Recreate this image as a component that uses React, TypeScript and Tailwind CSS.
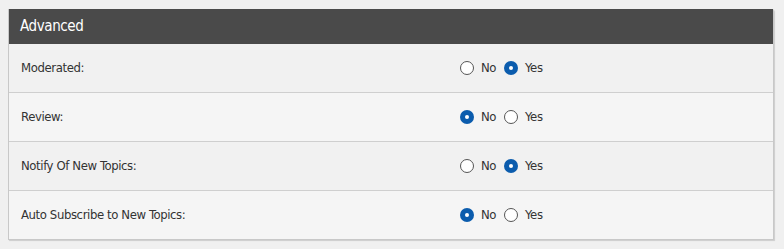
import React, { useState } from 'react';

type Row = { label: string; value: 'no' | 'yes' };

const initial: Row[] = [
    { label: 'Moderated:', value: 'yes' },
    { label: 'Review:', value: 'no' },
    { label: 'Notify Of New Topics:', value: 'yes' },
    { label: 'Auto Subscribe to New Topics:', value: 'no' },
];

function Radio({ checked, label, onClick }: { checked: boolean; label: string; onClick: () => void }) {
    return (
        <button type="button" onClick={onClick} className="flex items-center gap-[7px]">
            {checked ? (
                <span className="w-[14px] h-[14px] rounded-full bg-[#0b5cad] flex items-center justify-center">
                    <span className="w-[4px] h-[4px] rounded-full bg-white" />
                </span>
            ) : (
                <span className="w-[14px] h-[14px] rounded-full border border-[#555] bg-white" />
            )}
            <span>{label}</span>
        </button>
    );
}

export default function App() {
    const [rows, setRows] = useState(initial);

    const set = (i: number, value: 'no' | 'yes') =>
        setRows(rows.map((r, j) => (j === i ? { ...r, value } : r)));

    return (
        <main
            className="min-h-[249px] bg-[#f0f0f0] pt-[9px] px-[8px] pb-[10px] text-[13px] tracking-[-0.4px] text-[#333]"
            style={{ fontFamily: '"DejaVu Sans Condensed", "DejaVu Sans", sans-serif' }}
        >
            <div className="w-[766px] border border-[#c8c8c8] border-t-0 shadow-[1px_1px_1px_rgba(0,0,0,0.15)] rounded-tr-[2px]">
                {/* Header */}
                <div className="h-[35px] bg-[#4a4a4a] text-white text-[15px] flex items-center px-[11px]">
                    Advanced
                </div>

                {rows.map((row, i) => (
                    <div
                        key={row.label}
                        className={`flex items-center px-[12px] ${i > 0 ? 'h-[49px] border-t border-[#cfcfcf]' : 'h-[48px]'} ${i % 2 === 0 ? 'bg-[#f1f1f1]' : 'bg-[#f5f5f5]'}`}
                    >
                        <div className="w-[439px]">{row.label}</div>
                        <div className="flex items-center gap-[8px]">
                            <Radio checked={row.value === 'no'} label="No" onClick={() => set(i, 'no')} />
                            <Radio checked={row.value === 'yes'} label="Yes" onClick={() => set(i, 'yes')} />
                        </div>
                    </div>
                ))}
            </div>
        </main>
    );
}
